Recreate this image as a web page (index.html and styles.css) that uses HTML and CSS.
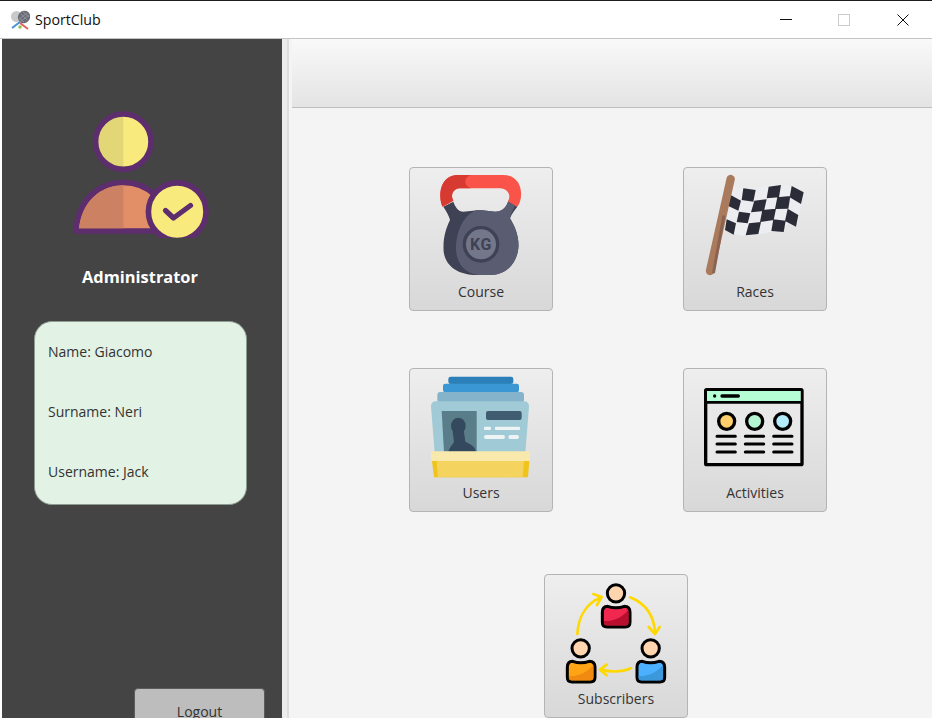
FILE: index.html
```html
<!DOCTYPE html>
<html lang="en">
<head>
<meta charset="utf-8">
<title>SportClub</title>
<link rel="stylesheet" href="styles.css">
</head>
<body>
<div class="window">
  <header class="titlebar">
    <svg class="app-icon" viewBox="0 0 20 20" width="20" height="20" aria-hidden="true">
      <circle cx="6.500" cy="6.500" r="5.500" fill="#c9c9c9"/>
      <path d="M10 12 2 18" stroke="#4b8fd8" stroke-width="2"/>
      <path d="M10 13 18 19" stroke="#e0605c" stroke-width="2"/>
      <ellipse cx="14" cy="7" rx="6" ry="6.500" fill="#6b6e76" transform="rotate(40 14 7)"/>
      <path d="M9 8 14 12M11 4 17 10M13 2 19 7M8 10 17 3M10 12 19 5" stroke="#9a9ca3" stroke-width=".7"/>
      <circle cx="10" cy="17" r="1.700" fill="#8cc152"/>
    </svg>
    <span class="app-name">SportClub</span>
    <div class="controls">
      <span class="control"><svg width="12" height="12" viewBox="0 0 12 12"><path d="M0 5.500H12" stroke="#111" stroke-width="1"/></svg></span>
      <span class="control"><svg width="12" height="12" viewBox="0 0 12 12"><rect x=".5" y=".5" width="11" height="11" fill="none" stroke="#ccc"/></svg></span>
      <span class="control"><svg width="12" height="12" viewBox="0 0 12 12"><path d="M.5.5 11.500 11.500M11.500.5.5 11.500" stroke="#111" stroke-width="1"/></svg></span>
    </div>
  </header>

  <div class="body">
    <aside class="sidebar">
      <svg class="avatar" viewBox="72 108 140 130" width="140" height="130" aria-hidden="true">
        <circle cx="123.300" cy="141.700" r="27.700" fill="#f8ea7c"/>
        <path d="M123.300 114A27.700 27.700 0 0 0 123.300 169.400Z" fill="#e3d677"/>
        <circle cx="123.300" cy="141.700" r="27.700" fill="none" stroke="#5e2d6e" stroke-width="5.600"/>
        <path d="M76 231C78 200 99 182.500 123.300 182.500S168 200 170 231Z" fill="#e28e66" stroke="#5e2d6e" stroke-width="5.600" stroke-linejoin="round"/>
        <path d="M79 228.200C82 202 100 185.300 123.300 185.300V228.200Z" fill="#cd8163"/>
        <circle cx="177.200" cy="211.700" r="28.800" fill="#f8ea7c" stroke="#5e2d6e" stroke-width="5.600"/>
        <path d="M165.500 210.500 173.500 218 190.500 205.500" fill="none" stroke="#5e2d6e" stroke-width="5.200" stroke-linecap="round" stroke-linejoin="round"/>
      </svg>
      <h1 class="role">Administrator</h1>
      <section class="card">
        <p>Name: Giacomo</p>
        <p>Surname: Neri</p>
        <p>Username: Jack</p>
      </section>
      <button class="logout" type="button">Logout</button>
    </aside>

    <div class="divider"></div>

    <main class="main">
      <div class="toolbar"></div>
      <div class="menu">
        <div class="menu-row">
          <button class="tile" type="button">
            <svg viewBox="30 24 426 330" width="142" height="110" aria-hidden="true">
              <path d="M130 140C140 155 148 170 150 180C138 205 128 235 131 275C137 320 175 345 230 345H270C320 345 350 310 355 265C358 230 345 200 330 175C335 160 345 150 352 140L325 122C322 135 310 155 285 155L240 150L190 155C175 155 165 140 160 125Z" fill="#3f4254"/>
              <path d="M330 175C345 200 358 230 355 265C350 310 320 345 270 345H235C195 340 168 310 168 265C168 215 190 165 230 150L240 150L285 155C305 155 318 145 325 122L345 135C340 150 332 160 330 175Z" fill="#5a5d72"/>
              <path d="M128 140C115 115 115 45 175 45H310C370 45 372 115 352 140L324 124C335 105 322 85 300 85H180C160 85 150 105 160 122Z" fill="#f9534a"/>
              <path d="M128 140C115 115 115 45 175 45H215C190 48 190 80 215 85H180C160 85 150 105 160 122Z" fill="#d63a30"/>
              <circle cx="243" cy="253" r="50" fill="#74768a" stroke="#3f4254" stroke-width="10"/>
              <text x="243" y="271" class="kg">KG</text>
            </svg>
            <span class="tile-label">Course</span>
          </button>
          <button class="tile" type="button">
            <svg viewBox="27 24 426 330" width="142" height="110" aria-hidden="true">
              <path d="M170 75C205 95 240 85 280 78C320 70 350 75 386 95L368 190C345 175 320 215 290 215C260 222 225 235 180 222L150 212Z" fill="#ebedf0"/>
              <path d="M205 85 242 90 235 125 200 120ZM281 80 318 75 312 112 275 115ZM350 78 386 97 378 132 344 112ZM167 105 198 122 190 152 160 138ZM238 122 275 118 267 153 228 157ZM307 112 346 108 340 146 300 147ZM192 155 226 160 218 190 185 186ZM262 150 303 146 296 180 255 186ZM338 146 370 165 363 200 330 183ZM155 178 183 190 176 224 150 210ZM222 190 258 186 250 222 212 226ZM295 178 332 182 326 216 289 213Z" fill="#2a2c38"/>
              <path d="M167 57 105 333" stroke="#a97a5c" stroke-width="25" stroke-linecap="round"/>
              <path d="M146 170 116 336" stroke="#8b6350" stroke-width="9" stroke-linecap="round"/>
            </svg>
            <span class="tile-label">Races</span>
          </button>
        </div>
        <div class="menu-row">
          <button class="tile" type="button">
            <svg viewBox="30 27 426 330" width="142" height="110" aria-hidden="true">
              <rect x="145" y="50" width="195" height="22" rx="7" fill="#2b80b9"/>
              <rect x="129" y="71" width="228" height="26" rx="7" fill="#3a97d4"/>
              <rect x="112" y="96" width="260" height="32" rx="9" fill="#85b3cb"/>
              <path d="M107 124H373C382 124 387 130 387 140L375 290H105L93 140C93 130 98 124 107 124Z" fill="#a0cad5"/>
              <path d="M125 153H230V275H132Z" fill="#5a7d8a"/>
              <ellipse cx="175" cy="198" rx="22" ry="25" fill="#34495e"/>
              <path d="M158 215H192L196 245C210 252 225 258 228 275H145C150 258 160 252 162 245Z" fill="#34495e"/>
              <rect x="258" y="153" width="107" height="27" rx="6" fill="#3f5c71"/>
              <rect x="252" y="200" width="21" height="10" rx="3" fill="#eef4f5"/>
              <rect x="285" y="200" width="75" height="10" rx="2" fill="#eef4f5"/>
              <rect x="252" y="225" width="63" height="12" rx="6" fill="#eef4f5"/>
              <rect x="325" y="225" width="32" height="12" rx="6" fill="#eef4f5"/>
              <path d="M96 303H388L384 352H102Z" fill="#f0c419"/>
              <path d="M110 303H372L368 352H114Z" fill="#f4d35e"/>
              <rect x="93" y="274" width="297" height="29" rx="3" fill="#f9e9ad"/>
            </svg>
            <span class="tile-label">Users</span>
          </button>
          <button class="tile" type="button">
            <svg viewBox="27 27 426 330" width="142" height="110" aria-hidden="true">
              <rect x="92" y="89" width="289" height="225" rx="3" fill="#e8e8e8" stroke="#000" stroke-width="10"/>
              <rect x="96" y="93" width="281" height="30" fill="#b5fdd5"/>
              <path d="M92 127H381" stroke="#000" stroke-width="8"/>
              <circle cx="119" cy="108" r="5" fill="#000"/>
              <path d="M141 108H190" stroke="#000" stroke-width="10" stroke-linecap="round"/>
              <circle cx="155" cy="184" r="24" fill="#ffcf6b" stroke="#000" stroke-width="10"/>
              <circle cx="239" cy="184" r="24" fill="#b3f5d0" stroke="#000" stroke-width="10"/>
              <circle cx="323" cy="184" r="24" fill="#b3ecfb" stroke="#000" stroke-width="10"/>
              <path d="M126 229H181M126 252H181M126 276H181M211 229H266M211 252H266M211 276H266M296 229H351M296 252H351M296 276H351" stroke="#000" stroke-width="9" stroke-linecap="round"/>
            </svg>
            <span class="tile-label">Activities</span>
          </button>
        </div>
        <div class="menu-row menu-row-single">
          <button class="tile" type="button">
            <svg viewBox="30 30 426 330" width="142" height="110" aria-hidden="true">
              <g fill="none" stroke="#ffd800" stroke-width="8" stroke-linecap="round" stroke-linejoin="round">
                <path d="M127 207C130 155 155 115 198 97"/>
                <path d="M175 87 200 96 186 120"/>
                <path d="M285 97C330 115 357 150 360 203"/>
                <path d="M341 186 360 207 374 186"/>
                <path d="M288 310C260 322 230 322 197 314"/>
                <path d="M215 299 195 314 215 331"/>
              </g>
              <g stroke="#000" stroke-width="9" stroke-linejoin="round">
                <circle cx="243" cy="85" r="26" fill="#ffd5b0"/>
                <path d="M218 124C235 130 250 130 268 124C280 124 285 132 285 142V172C285 181 280 186 271 186H216C207 186 202 181 202 172V142C202 132 207 124 218 124Z" fill="#f0284f"/>
                <circle cx="137" cy="250" r="26" fill="#ffd5b0"/>
                <path d="M113 289C130 295 145 295 163 289C175 289 180 297 180 307V337C180 346 175 351 166 351H111C102 351 97 346 97 337V307C97 297 102 289 113 289Z" fill="#ffa515"/>
                <circle cx="347" cy="250" r="26" fill="#ffd5b0"/>
                <path d="M322 289C339 295 354 295 372 289C384 289 389 297 389 307V337C389 346 384 351 375 351H320C311 351 306 346 306 337V307C306 297 311 289 322 289Z" fill="#4ab0ff"/>
              </g>
              <path d="M207 168C235 170 265 155 280 134V172C280 178 277 181 271 181H216C210 181 207 178 207 172Z" fill="#b80f2f"/>
              <path d="M102 333C130 335 160 320 175 299V337C175 343 172 346 166 346H111C105 346 102 343 102 337Z" fill="#f08a10"/>
              <path d="M311 333C339 335 369 320 384 299V337C384 343 381 346 375 346H320C314 346 311 343 311 337Z" fill="#3a98db"/>
            </svg>
            <span class="tile-label">Subscribers</span>
          </button>
        </div>
      </div>
    </main>
  </div>
</div>
</body>
</html>
```

FILE: styles.css
```css
* { box-sizing: border-box; }

html, body {
  margin: 0;
  height: 100%;
  overflow: hidden;
}

body {
  font-family: "Open Sans", "Noto Sans", sans-serif;
  font-size: 14px;
  color: #333;
  background: #fff;
}

.window {
  display: flex;
  flex-direction: column;
  height: 718px;
  overflow: hidden;
  border-top: 1px solid #1c1c1c;
}

.titlebar {
  display: flex;
  align-items: center;
  flex: 0 0 38px;
  height: 38px;
  padding-left: 10px;
  background: #fff;
  border-bottom: 1px solid #c4c4c4;
}

.app-icon { margin-right: 5px; }

.app-name {
  font-size: 14.2px;
  color: #111;
}

.controls {
  display: flex;
  margin-left: auto;
}

.control {
  display: flex;
  align-items: center;
  justify-content: center;
  width: 58px;
  height: 37px;
}

.control:last-child { width: 59px; }

.body {
  display: flex;
  flex: 1;
  min-height: 0;
}

.sidebar {
  display: flex;
  flex-direction: column;
  align-items: center;
  flex: 0 0 280px;
  margin-left: 2px;
  padding-top: 69px;
  background: #444;
}

.avatar {
  display: block;
  flex: none;
}

.role {
  flex: none;
  margin: 27px 0 0 -4px;
  font-size: 16.4px;
  font-weight: 700;
  line-height: 24px;
  color: #fff;
}

.card {
  display: flex;
  flex: none;
  flex-direction: column;
  gap: 40px;
  align-self: flex-start;
  width: 213px;
  height: 184px;
  margin: 32px 0 0 32px;
  padding: 20px 13px 0;
  background: #e2f2e5;
  border: 1px solid #8d9c90;
  border-radius: 18px;
}

.card p {
  margin: 0;
  font-size: 14px;
  line-height: 20px;
  color: #333;
}

.logout {
  display: block;
  flex: none;
  align-self: flex-end;
  width: 131px;
  height: 47px;
  margin: 183px 17px 0 0;
  padding: 0;
  font: inherit;
  line-height: 20px;
  color: #333;
  text-align: center;
  background: #bdbdbd;
  border: 1px solid #5c5c5c;
  border-radius: 4px;
}

.divider {
  flex: 0 0 10px;
  background: linear-gradient(to right, #ececec 0 5px, #dcdcdc 5px 7px, #f4f4f4 7px);
}

.main {
  display: flex;
  flex-direction: column;
  flex: 1;
  min-width: 0;
  background: #f4f4f4;
}

.toolbar {
  flex: 0 0 69px;
  background: linear-gradient(to bottom, #f9f9f9, #e4e4e4);
  border-bottom: 1px solid #bdbdbd;
}

.menu {
  display: flex;
  flex-direction: column;
  padding-top: 59px;
}

.menu-row {
  display: flex;
  flex: none;
  gap: 130px;
  padding-left: 117px;
  margin-bottom: 57px;
}

.menu-row + .menu-row + .menu-row { margin-top: 5px; }

.menu-row-single { padding-left: 252px; }

.tile {
  display: flex;
  flex-direction: column;
  align-items: center;
  flex: 0 0 144px;
  width: 144px;
  height: 144px;
  padding: 0;
  font: inherit;
  color: #333;
  background: linear-gradient(to bottom, #eeeeee, #d8d8d8);
  border: 1px solid #b4b4b4;
  border-radius: 4px;
}

.tile svg { display: block; flex: none; }

.tile-label {
  margin-top: 4px;
  line-height: 20px;
}

.kg {
  font-family: "Roboto", sans-serif;
  font-size: 48px;
  font-weight: 700;
  letter-spacing: 2px;
  fill: #3f4254;
  text-anchor: middle;
}
```
